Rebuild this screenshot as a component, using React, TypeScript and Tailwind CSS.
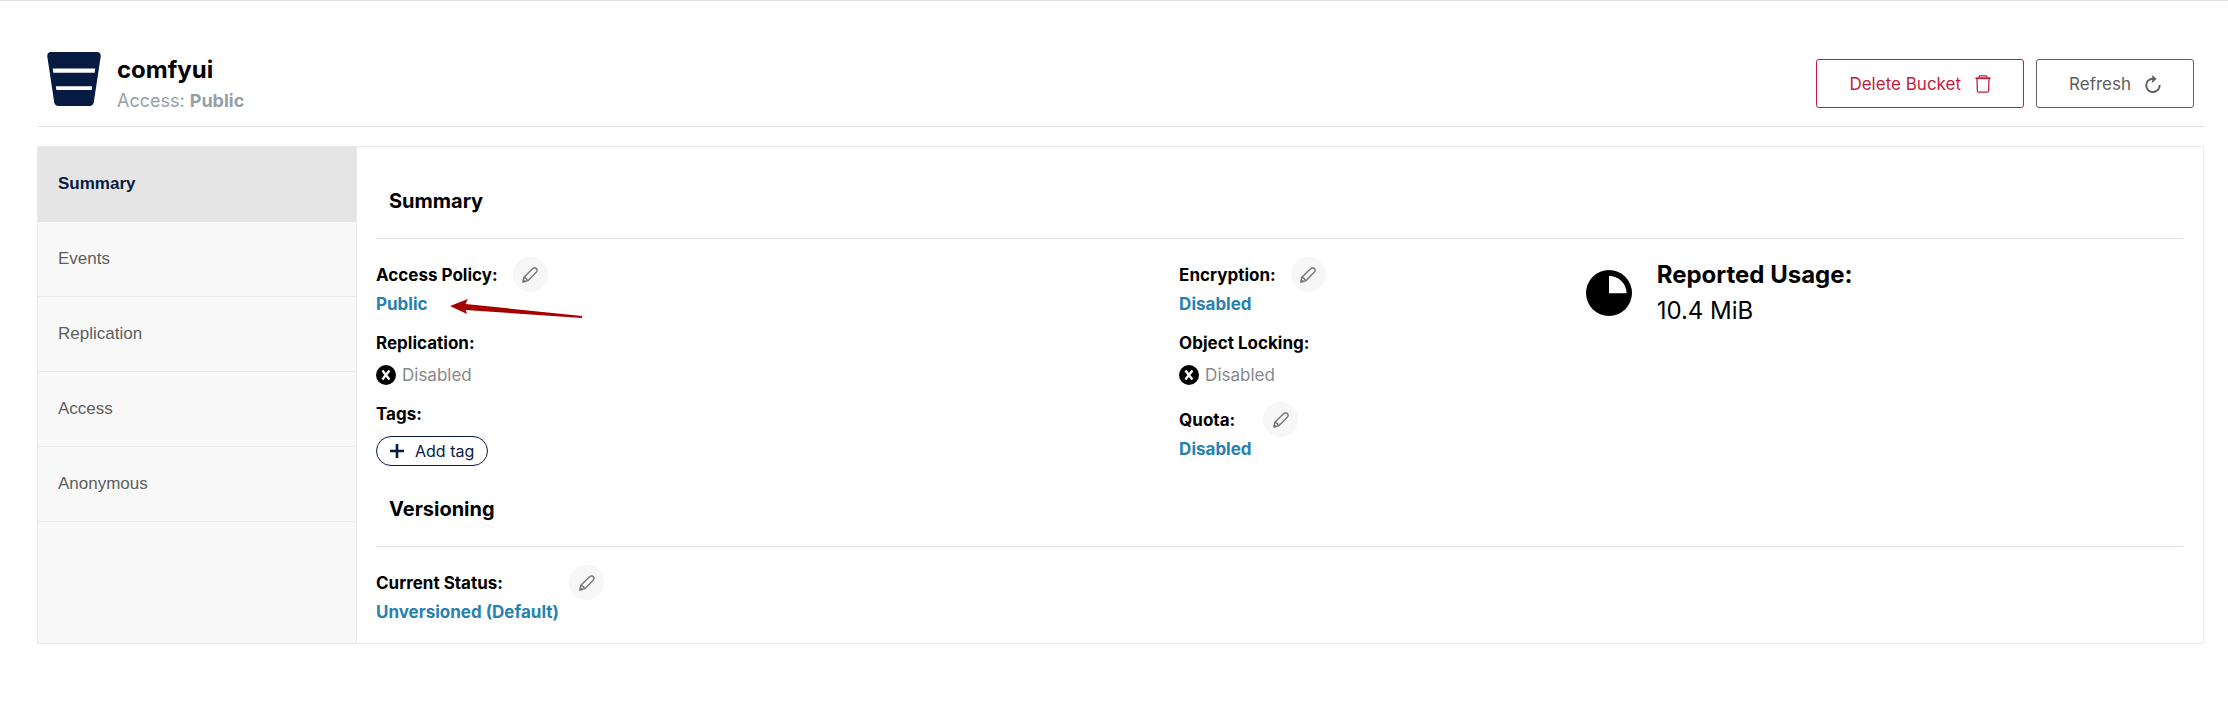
import { ReactNode } from "react";

function BucketIcon() {
  return (
    <svg viewBox="0 0 54 54" className="h-[54px] w-[54px] self-start" aria-hidden="true">
      <path
        d="M4 0H50C52.6 0 54 2 53.7 4.4L46.8 50.2C46.4 52.6 44.8 54 42.5 54H11.5C9.2 54 7.6 52.6 7.2 50.2L.3 4.4C0 2 1.4 0 4 0Z"
        fill="#071a42"
      />
      <path d="M5.7 16.5H48.2L47.6 20.7H6.3ZM8.8 34.2H45.2L44.6 38H9.4Z" fill="#fff" />
    </svg>
  );
}

function TrashIcon() {
  return (
    <svg viewBox="0 0 16 18" className="h-[18px] w-4" fill="none" stroke="currentColor" aria-hidden="true">
      <path d="M.5 3.2H15.5" strokeWidth="1.8" />
      <path d="M3.8 2.6 4.6.8H11.4L12.2 2.6" strokeWidth="1.2" />
      <path d="M2 3.5 2.4 16Q2.5 17.2 3.6 17.2H12.4Q13.5 17.2 13.6 16L14 3.5" strokeWidth="1.3" />
    </svg>
  );
}

function RefreshIcon() {
  return (
    <svg viewBox="0 0 16 18" className="h-[18px] w-4" aria-hidden="true">
      <path d="M14.6 10A6.7 6.7 0 1 1 8 3.7" fill="none" stroke="currentColor" strokeWidth="2" />
      <path d="M7.2 0 11.6 4.1 6.6 8.2 7.4 4.6Z" fill="currentColor" />
    </svg>
  );
}

function PencilIcon() {
  return (
    <svg viewBox="0 0 16 16" className="h-4 w-4" fill="none" stroke="#767676" strokeWidth="1.4" strokeLinejoin="round" aria-hidden="true">
      <path d="M1.2 14.8 1.7 10.4 10.3 1.9Q11.6.7 13.2 1Q14.9 1.3 15.1 2.9Q15.2 4.2 14.2 5.3L5.6 13.9Z" />
      <path d="M1.8 10.6Q4.9 10.8 5.4 13.9" />
      <path d="M1 15 1.3 12.9 3.1 14.6Z" fill="#767676" />
    </svg>
  );
}

function CrossIcon() {
  return (
    <svg viewBox="0 0 20 20" className="h-5 w-5 shrink-0" aria-hidden="true">
      <circle cx="10" cy="10" r="10" fill="#000" />
      <path d="M6.4 5.6 13.4 14.4M13.4 5.6 6.4 14.4" stroke="#fff" strokeWidth="2.4" />
    </svg>
  );
}

function UsageIcon() {
  return (
    <svg viewBox="0 0 46 46" className="h-[46px] w-[46px] shrink-0" aria-hidden="true">
      <circle cx="23" cy="23" r="23" fill="#000" />
      <path d="M23 6A17.4 17.4 0 0 1 40.6 23.3H23Z" fill="#fff" />
    </svg>
  );
}

function EditButton({ label }: { label: string }) {
  return (
    <button
      type="button"
      aria-label={label}
      className="flex h-[35px] w-[35px] items-center justify-center rounded-full bg-[#f7f7f7]"
    >
      <PencilIcon />
    </button>
  );
}

function SectionTitle({ children, className }: { children: ReactNode; className: string }) {
  return (
    <h2 className={"border-b border-[#e2e2e2] px-[13px] pb-6 text-xl leading-[26px] font-bold " + className}>
      {children}
    </h2>
  );
}

function EditableField({ label, value, gap }: { label: string; value: string; gap: string }) {
  return (
    <div>
      <div className={"flex items-center " + gap}>
        <span className="font-bold">{label}</span>
        <EditButton label={"Edit " + label.replace(":", "")} />
      </div>
      <a href="#" className="block leading-6 font-bold text-[#2781b0]">
        {value}
      </a>
    </div>
  );
}

function DisabledField({ label }: { label: string }) {
  return (
    <div>
      <div className="font-bold">{label}</div>
      <div className="mt-2 flex items-center gap-[6px] text-[#87888b]">
        <CrossIcon />
        Disabled
      </div>
    </div>
  );
}

const tabs = ["Summary", "Events", "Replication", "Access", "Anonymous"];

export default function App() {
  return (
    <div className="border-t border-[#e2e2e2] bg-white pr-6 pl-[37px] font-[Inter,sans-serif] text-[17px] leading-6 text-black">
      <header className="flex items-center justify-between border-b border-[#e2e2e2] px-[10px] pt-[51px] pb-[11px]">
        <div className="flex gap-4">
          <BucketIcon />
          <div>
            <h1 className="text-2xl leading-[35px] font-bold">comfyui</h1>
            <p className="text-lg leading-7 text-[#969fa8]">
              Access: <span className="font-bold">Public</span>
            </p>
          </div>
        </div>
        <div className="flex gap-3">
          <button
            type="button"
            className="flex h-[49px] items-center gap-[14px] rounded-[3px] border border-[#c51b3f] px-8 text-[#c51b3f]"
          >
            Delete Bucket
            <TrashIcon />
          </button>
          <button
            type="button"
            className="flex h-[49px] items-center gap-[14px] rounded-[3px] border border-[#5e5e5e] px-8 text-[#5e5e5e]"
          >
            Refresh
            <RefreshIcon />
          </button>
        </div>
      </header>

      <div className="mt-[19px] flex border border-[#eaeaea]">
        <nav className="w-[319px] shrink-0 border-r border-[#eaeaea] bg-[#f8f8f8] font-['Liberation_Sans',sans-serif]">
          {tabs.map((tab, i) => (
            <button
              key={tab}
              type="button"
              className={
                i === 0
                  ? "flex h-[75px] w-full items-center border-b border-[#e5e5e5] bg-[#e5e5e5] px-5 font-bold text-[#081c42]"
                  : "flex h-[75px] w-full items-center border-b border-[#eaeaea] px-5 text-[#5e5e5e]"
              }
            >
              {tab}
            </button>
          ))}
        </nav>

        <main className="min-w-0 flex-1 pr-5 pb-[19px] pl-[19px]">
          <SectionTitle className="pt-[41px]">Summary</SectionTitle>
          <div className="grid grid-cols-[4fr_2fr_3fr] pt-[18px]">
            <div className="flex flex-col gap-[15px]">
              <div className="relative">
                <EditableField label="Access Policy:" value="Public" gap="gap-[15px]" />
                <svg
                  viewBox="0 0 132 19"
                  className="absolute top-[42px] left-[74px] h-[19px] w-[132px]"
                  aria-hidden="true"
                >
                  <path d="M0 7 18 0 15.5 5 132 17V19L15.5 11 17 15Z" fill="#a80000" />
                </svg>
              </div>
              <DisabledField label="Replication:" />
              <div>
                <div className="font-bold">Tags:</div>
                <button
                  type="button"
                  className="mt-[10px] flex h-[30px] items-center gap-[11px] rounded-full border border-[#081c42] px-[13px] text-base text-[#081c42]"
                >
                  <svg viewBox="0 0 14 14" className="h-[14px] w-[14px]" aria-hidden="true">
                    <path d="M7 0V14M0 7H14" stroke="currentColor" strokeWidth="2.6" />
                  </svg>
                  Add tag
                </button>
              </div>
            </div>
            <div className="flex flex-col gap-[15px]">
              <EditableField label="Encryption:" value="Disabled" gap="gap-[15px]" />
              <DisabledField label="Object Locking:" />
              <EditableField label="Quota:" value="Disabled" gap="gap-7" />
            </div>
            <div className="flex items-start gap-[25px] pl-[5px]">
              <div className="pt-[13px]">
                <UsageIcon />
              </div>
              <div>
                <div className="text-2xl leading-9 font-bold">Reported Usage:</div>
                <div className="text-2xl leading-9">10.4 MiB</div>
              </div>
            </div>
          </div>
          <SectionTitle className="pt-[30px]">Versioning</SectionTitle>
          <div className="pt-[18px]">
            <EditableField label="Current Status:" value="Unversioned (Default)" gap="gap-[66px]" />
          </div>
        </main>
      </div>
    </div>
  );
}
